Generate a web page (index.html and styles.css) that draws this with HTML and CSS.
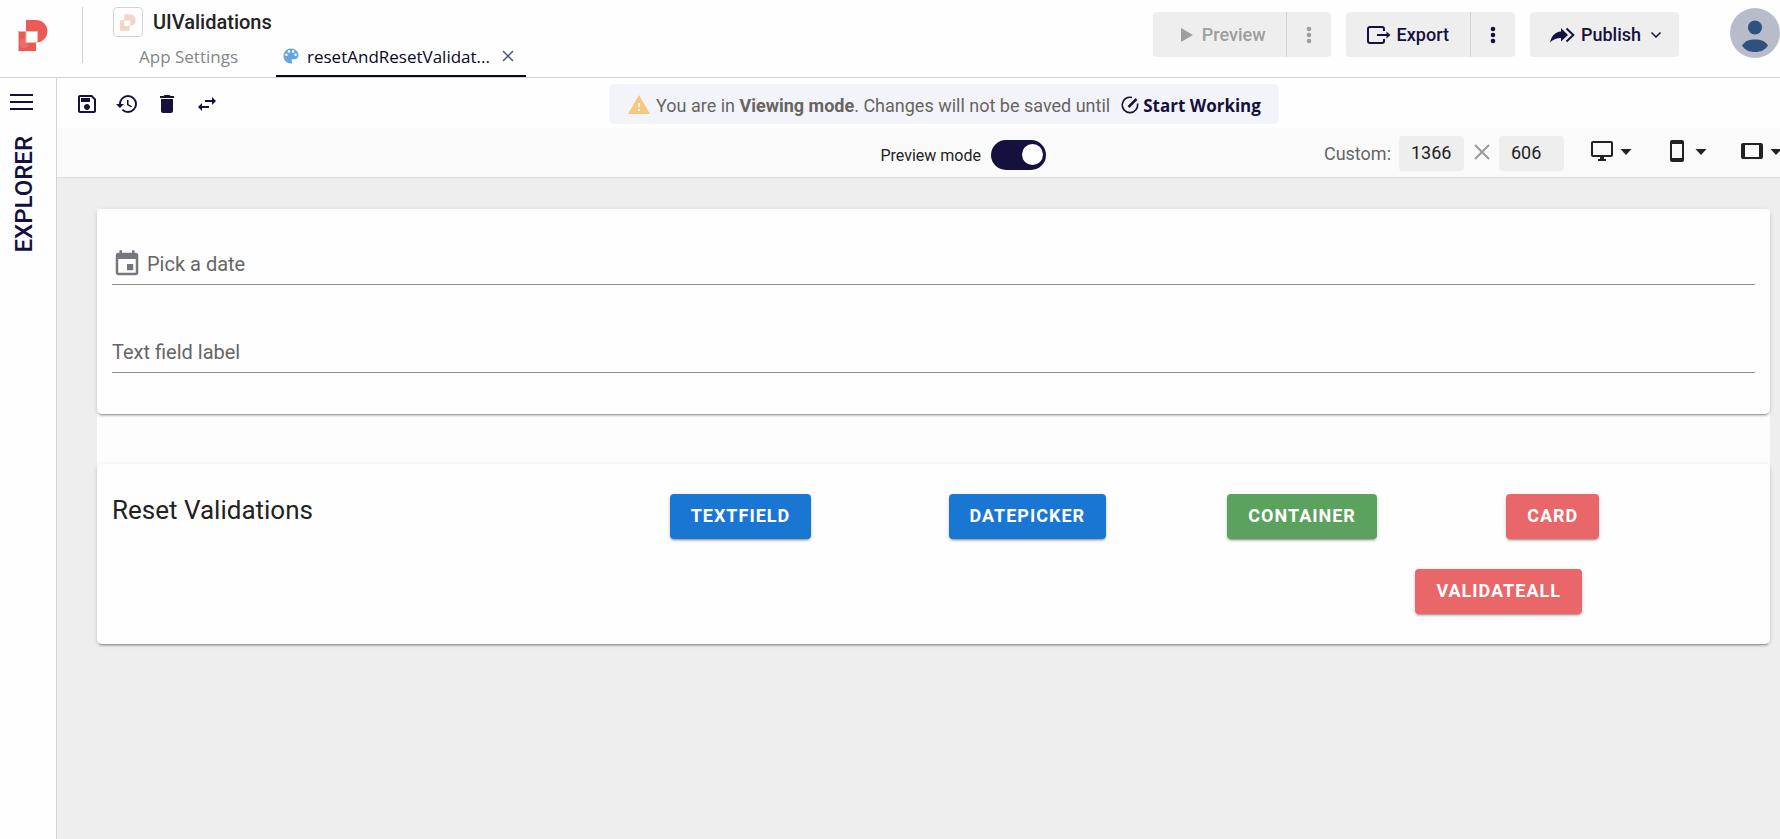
FILE: index.html
```html
<!DOCTYPE html>
<html lang="en">
<head>
<meta charset="utf-8">
<title>UIValidations</title>
<link rel="stylesheet" href="styles.css">
</head>
<body>
<header class="header">
  <a class="brand" href="#" aria-label="Home">
    <svg width="30" height="31" viewBox="0 0 30 31"><path d="M8 0h10a11.200 11 0 0 1 0 22.500V31H0V11.500h8z" fill="#ec5a58"/><circle cx="6" cy="23.500" r="4.500" fill="#ea6c70"/><path d="M.5 30.500V12M8 11.500h11.500v11H8z" fill="#fff" stroke="#f3bb9d"/></svg>
  </a>
  <div class="project">
    <div class="project-name">
      <span class="app-icon"><svg width="16" height="17" viewBox="0 0 30 31"><path d="M8 0h10a11.200 11 0 0 1 0 22.500V31H0V11.500h8z" fill="#f4d5c5"/><path d="M8 12h11v10H8z" fill="#fff"/></svg></span>
      <h1 class="title">UIValidations</h1>
    </div>
    <nav class="tabs">
      <a class="tab" href="#">App Settings</a>
      <div class="tab tab-active">
        <svg width="20" height="20" viewBox="0 0 24 24" fill="#63a6e0"><path d="M12 3c-4.970 0-9 4.030-9 9s4.030 9 9 9c.83 0 1.500-.67 1.500-1.500 0-.39-.15-.74-.39-1.010-.23-.26-.38-.61-.38-.99 0-.83.67-1.500 1.500-1.500H16c2.760 0 5-2.240 5-5 0-4.420-4.030-8-9-8zm-5.500 9c-.83 0-1.500-.67-1.500-1.500S5.670 9 6.500 9 8 9.670 8 10.500 7.330 12 6.500 12zm3-4C8.670 8 8 7.330 8 6.500S8.670 5 9.500 5s1.500.67 1.500 1.500S10.330 8 9.500 8zm5 0c-.83 0-1.500-.67-1.500-1.500S13.670 5 14.500 5s1.500.67 1.500 1.500S15.330 8 14.500 8zm3 4c-.83 0-1.500-.67-1.500-1.500S16.670 9 17.500 9s1.500.67 1.500 1.500-.67 1.500-1.500 1.500z"/></svg>
        <a class="tab-name" href="#">resetAndResetValidat...</a>
        <button class="plain" aria-label="Close tab"><svg width="12" height="12" viewBox="0 0 12 12" fill="none" stroke="#4d5968" stroke-width="1.500"><path d="M1 1l10 10M11 1L1 11"/></svg></button>
      </div>
    </nav>
  </div>
  <div class="actions">
    <div class="split split-off">
      <button class="act act-main" disabled><svg width="12" height="14" viewBox="0 0 12 14" fill="currentColor"><path d="M0 0l12 7-12 7z"/></svg>Preview</button>
      <button class="act act-more" disabled aria-label="Preview options"><svg width="6" height="18" viewBox="0 0 6 18" fill="currentColor"><circle cx="3" cy="3" r="2.300"/><circle cx="3" cy="9" r="2.300"/><circle cx="3" cy="15" r="2.300"/></svg></button>
    </div>
    <div class="split">
      <button class="act act-export"><svg width="24" height="18" viewBox="0 0 24 18" fill="none" stroke="currentColor" stroke-width="2"><path d="M17 5V3a2 2 0 0 0-2-2H3a2 2 0 0 0-2 2v12a2 2 0 0 0 2 2h12a2 2 0 0 0 2-2v-2M10 9h12"/><path d="M19.500 5.500L23.500 9l-4 3.500z" fill="currentColor" stroke="none"/></svg>Export</button>
      <button class="act act-more" aria-label="Export options"><svg width="6" height="18" viewBox="0 0 6 18" fill="currentColor"><circle cx="3" cy="3" r="2.300"/><circle cx="3" cy="9" r="2.300"/><circle cx="3" cy="15" r="2.300"/></svg></button>
    </div>
    <div class="split">
      <button class="act act-publish"><svg width="25" height="16" viewBox="0 0 25 16"><path d="M0 15.500C1.500 9 5 5 11 4.500V1l7 7-7 6.500V11C6 11 3 12.500 0 15.500z" fill="currentColor"/><path d="M16.500 1.500L23.300 8l-6.800 6.500" fill="none" stroke="currentColor" stroke-width="2"/></svg>Publish<svg class="chev" width="10" height="6" viewBox="0 0 10 6" fill="none" stroke="currentColor" stroke-width="1.500"><path d="M.5.5L5 5 9.500.5"/></svg></button>
    </div>
    <button class="plain" aria-label="Account"><svg width="50" height="50" viewBox="0 0 50 50"><circle cx="25" cy="25" r="25" fill="#b8bbca"/><circle cx="25" cy="19.500" r="7" fill="#30507f"/><path d="M12 37.500C15 33 19 31.500 25 31.500S35 33 38 37.500C35 42 31 44 25 44s-10-2-13-6.500z" fill="#30507f"/></svg></button>
  </div>
</header>
<div class="body">
  <aside class="side">
    <button class="plain" aria-label="Menu"><svg width="23" height="16" viewBox="0 0 23 16" fill="currentColor"><path d="M0 0h23v2H0zM0 7h23v2H0zM0 14h23v2H0z"/></svg></button>
    <span class="side-label">EXPLORER</span>
  </aside>
  <main class="main">
    <div class="toolbar">
      <div class="tools">
        <button class="plain" aria-label="Save"><svg class="mi" viewBox="0 0 24 24"><path d="M17 3H5c-1.110 0-2 .9-2 2v14c0 1.100.89 2 2 2h14c1.100 0 2-.9 2-2V7l-4-4zm2 16H5V5h11.170L19 7.830V19zm-7-7c-1.660 0-3 1.340-3 3s1.340 3 3 3 3-1.340 3-3-1.340-3-3-3zM6 6h9v4H6V6z"/></svg></button>
        <button class="plain" aria-label="History"><svg class="mi" viewBox="0 0 24 24"><path d="M13 3a9 9 0 0 0-9 9H1l3.890 3.890.07.14L9 12H6c0-3.870 3.130-7 7-7s7 3.130 7 7-3.130 7-7 7c-1.930 0-3.680-.79-4.940-2.060l-1.420 1.420A8.954 8.954 0 0 0 13 21a9 9 0 0 0 0-18zm-1 5v5l4.280 2.540.72-1.210-3.500-2.080V8H12z"/></svg></button>
        <button class="plain" aria-label="Delete"><svg class="mi" viewBox="0 0 24 24"><path d="M6 19c0 1.100.9 2 2 2h8c1.100 0 2-.9 2-2V7H6v12zM19 4h-3.500l-1-1h-5l-1 1H5v2h14V4z"/></svg></button>
        <button class="plain" aria-label="Swap"><svg class="mi" viewBox="0 0 24 24"><path d="M21,9L17,5V8H10V10H17V13M7,11L3,15L7,19V16H14V14H7V11Z"/></svg></button>
      </div>
      <div class="banner">
        <svg class="mi warn" viewBox="0 0 24 24"><path d="M1 21h22L12 2 1 21zm12-3h-2v-2h2v2zm0-4h-2v-4h2v4z"/></svg>
        <span class="banner-text">You are in <b>Viewing mode</b>. Changes will not be saved until</span>
        <button class="plain start"><svg width="18" height="18" viewBox="0 0 18 18" fill="none" stroke="currentColor" stroke-width="1.600"><path d="M11 1.500A7.700 7.700 0 1 0 16.500 7.500"/><path d="M7.500 11L15.500 3" stroke-width="2.500"/></svg>Start Working</button>
      </div>
    </div>
    <div class="viewbar">
      <label class="preview"><span class="preview-text">Preview mode</span><input class="switch" type="checkbox" role="switch" checked></label>
      <div class="sizes">
        <span class="custom">Custom:</span>
        <input class="dim" type="text" value="1366" aria-label="Width">
        <svg class="times" width="16" height="16" viewBox="0 0 16 16" fill="none" stroke="#9b9b9b" stroke-width="2"><path d="M1 1l14 14M15 1L1 15"/></svg>
        <input class="dim" type="text" value="606" aria-label="Height">
        <div class="devices">
          <button class="plain" aria-label="Desktop sizes"><svg class="mi" viewBox="0 0 24 24"><path d="M21,16H3V4H21M21,2H3C1.890,2 1,2.890 1,4V16A2,2 0 0,0 3,18H10V20H8V22H16V20H14V18H21A2,2 0 0,0 23,16V4C23,2.890 22.100,2 21,2Z"/></svg><svg class="mi" viewBox="0 0 24 24"><path d="M6.500,10L12,16L17.500,10Z"/></svg></button>
          <button class="plain" aria-label="Phone sizes"><svg class="mi" viewBox="0 0 24 24"><path d="M17,19H7V5H17M17,1H7C5.890,1 5,1.890 5,3V21A2,2 0 0,0 7,23H17A2,2 0 0,0 19,21V3C19,1.890 18.100,1 17,1Z"/></svg><svg class="mi" viewBox="0 0 24 24"><path d="M6.500,10L12,16L17.500,10Z"/></svg></button>
          <button class="plain" aria-label="Tablet sizes"><svg class="mi" viewBox="0 0 24 24"><path d="M19,18H5V6H19M21,4H3C1.890,4 1,4.890 1,6V18A2,2 0 0,0 3,20H21A2,2 0 0,0 23,18V6C23,4.890 22.100,4 21,4Z"/></svg><svg class="mi" viewBox="0 0 24 24"><path d="M6.500,10L12,16L17.500,10Z"/></svg></button>
        </div>
      </div>
    </div>
    <div class="canvas">
      <div class="page">
        <section class="card form">
          <div class="field">
            <svg width="30" height="30" viewBox="0 0 24 24" fill="#757780"><path d="M17 12h-5v5h5v-5zM16 1v2H8V1H6v2H5c-1.110 0-1.990.9-1.990 2L3 19c0 1.100.89 2 2 2h14c1.100 0 2-.9 2-2V5c0-1.100-.9-2-2-2h-1V1h-2zm3 18H5V8h14v11z"/></svg>
            <input class="text" type="text" placeholder="Pick a date" aria-label="Pick a date">
          </div>
          <div class="field">
            <input class="text" type="text" placeholder="Text field label" aria-label="Text field label">
          </div>
        </section>
        <section class="card resets">
          <h2 class="heading">Reset Validations</h2>
          <button class="btn blue">TEXTFIELD</button>
          <button class="btn blue">DATEPICKER</button>
          <button class="btn green">CONTAINER</button>
          <button class="btn red">CARD</button>
          <button class="btn red all">VALIDATEALL</button>
        </section>
      </div>
    </div>
  </main>
</div>
</body>
</html>
```
FILE: styles.css
```css
* { box-sizing: border-box; }
body {
  margin: 0;
  min-height: 100vh;
  display: flex;
  flex-direction: column;
  overflow-x: hidden;
  background: #fefefe;
  color: #14113f;
  font-family: Roboto, "Liberation Sans", sans-serif;
  font-size: 18px;
}
button, input { font: inherit; color: inherit; }
svg { display: block; flex: none; }
a { color: inherit; text-decoration: none; }
.plain {
  display: flex;
  align-items: center;
  padding: 0;
  border: 0;
  background: none;
}
.mi { width: 24px; height: 24px; fill: currentColor; }

.header {
  display: flex;
  height: 78px;
  border-bottom: 1px solid #d3d3d3;
}
.brand {
  width: 83px;
  height: 56px;
  margin-top: 7px;
  padding: 13px 0 0 18px;
  border-right: 1px solid #d0d0d0;
}
.project { display: flex; flex-direction: column; padding: 7px 0 0 30px; }
.project-name { display: flex; align-items: center; gap: 10px; height: 30px; }
.app-icon {
  display: flex;
  align-items: center;
  justify-content: center;
  width: 30px;
  height: 30px;
  border: 1px solid #d3d3d3;
  border-radius: 4px;
}
.title { margin: 0; font-size: 20px; font-weight: 500; color: #222; }
.tabs {
  display: flex;
  flex: 1;
  gap: 38px;
  padding-left: 26px;
  font-family: "Open Sans", sans-serif;
  font-size: 17px;
  color: #85858a;
}
.tab { display: flex; align-items: center; border-bottom: 2px solid transparent; }
.tab-active {
  padding: 0 12px 0 5px;
  border-bottom-color: #0b0724;
  color: #0b0724;
  font-weight: 500;
}
.tab-name { margin: 0 12px 0 6px; }
.actions { display: flex; gap: 15px; margin-left: auto; padding-top: 8px; }
.split {
  display: flex;
  height: 45px;
  margin-top: 4px;
  border-radius: 4px;
  background: #eee;
}
.split-off { color: #9e9e9e; }
.act {
  display: flex;
  align-items: center;
  border: 0;
  background: none;
  font-weight: 500;
  color: inherit;
}
.act-main { gap: 9px; padding: 0 20px 0 28px; }
.act-export { gap: 6px; padding: 0 21px; }
.act-publish { gap: 6px; padding: 0 18px 0 20px; }
.act-more {
  justify-content: center;
  width: 45px;
  padding: 0;
  border-left: 1px solid #d3d3d3;
}
.chev { margin-left: 4px; }
.actions > .plain { margin-left: 36px; height: 50px; }

.body { display: flex; flex: 1; }
.side {
  display: flex;
  flex-direction: column;
  gap: 26px;
  width: 57px;
  padding: 16px 10px 0;
  border-right: 1px solid #d3d3d3;
}
.side-label {
  writing-mode: vertical-rl;
  transform: rotate(180deg);
  line-height: 28px;
  align-self: flex-start;
  font-size: 24px;
  font-weight: 500;
}
.main { display: flex; flex: 1; flex-direction: column; min-width: 0; }
.toolbar {
  display: grid;
  grid-template-columns: 1fr auto 1fr;
  align-items: center;
  height: 50px;
  padding: 2px 0 0 51px;
}
.tools { display: flex; gap: 16px; margin-left: -33px; }
.banner {
  display: flex;
  align-items: center;
  height: 40px;
  padding: 2px 18px 0;
  border-radius: 4px;
  background: #f3f4fa;
}
.banner-text { margin: 0 11px 0 5px; color: #686460; }
.warn { fill: #f6c77e; }
.start {
  gap: 4px;
  font-family: "Open Sans", sans-serif;
  font-weight: 700;
  font-size: 17px;
}
.viewbar {
  display: flex;
  align-items: center;
  height: 50px;
  border-bottom: 1px solid #ddd;
  background: #fafafa;
  overflow: hidden;
}
.preview {
  display: flex;
  align-items: center;
  gap: 10px;
  margin: 4px 278px 0 auto;
  font-size: 16px;
  color: #222;
}
.preview-text { padding-top: 2px; }
.switch {
  display: flex;
  align-items: center;
  justify-content: flex-end;
  appearance: none;
  width: 55px;
  height: 30px;
  margin: 0;
  padding: 3px;
  border-radius: 15px;
  background: #14113f;
}
.switch::before {
  content: "";
  width: 21px;
  height: 21px;
  border-radius: 50%;
  background: #fff;
}
.sizes { display: flex; align-items: center; margin-right: -8px; color: #222; }
.custom { margin-right: 8px; padding-top: 2px; color: #666; }
.dim {
  width: 65px;
  height: 35px;
  margin-top: 2px;
  padding: 0 12px 2px;
  border: 0;
  border-radius: 4px;
  background: #eee;
}
.times { margin: 0 9px 2px 10px; }
.devices { display: flex; gap: 27px; margin: 0 0 4px 26px; }

.canvas { flex: 1; padding: 31px 10px 31px 40px; background: #eee; }
.page {
  display: flex;
  flex-direction: column;
  gap: 50px;
  background: #fdfdfd;
}
.card {
  border-radius: 5px;
  background: #fefefe;
  box-shadow: 0 3px 1px -2px rgba(0, 0, 0, .2), 0 2px 2px 0 rgba(0, 0, 0, .14), 0 1px 5px 0 rgba(0, 0, 0, .12);
}
.form { display: flex; flex-direction: column; gap: 47px; padding: 35px 15px 41px; }
.field { display: flex; align-items: center; height: 41px; border-bottom: 1px solid #8c8c8c; }
.text {
  flex: 1;
  min-width: 0;
  height: 40px;
  padding: 0;
  border: 0;
  background: none;
  font-size: 20px;
}
.field svg + .text { margin-left: 5px; }
.text::placeholder { color: #666; opacity: 1; }
.resets {
  display: grid;
  grid-template-columns: repeat(6, 1fr);
  row-gap: 30px;
  padding: 30px 0;
}
.heading {
  grid-column: span 2;
  margin: 0 0 0 15px;
  font-size: 26px;
  line-height: 32px;
  font-weight: 400;
  color: #222;
}
.btn {
  justify-self: start;
  height: 45px;
  margin-left: 15px;
  padding: 0 21px 2px;
  border: 0;
  border-radius: 4px;
  color: #fff;
  font-size: 18px;
  font-weight: 700;
  letter-spacing: 1px;
  box-shadow: 0 3px 1px -2px rgba(0, 0, 0, .2), 0 2px 2px 0 rgba(0, 0, 0, .14), 0 1px 5px 0 rgba(0, 0, 0, .12);
}
.blue { background: #1976d2; }
.green { background: #5aa25d; }
.red { background: #e96768; }
.all { grid-column: 5 / 7; justify-self: center; }
```
